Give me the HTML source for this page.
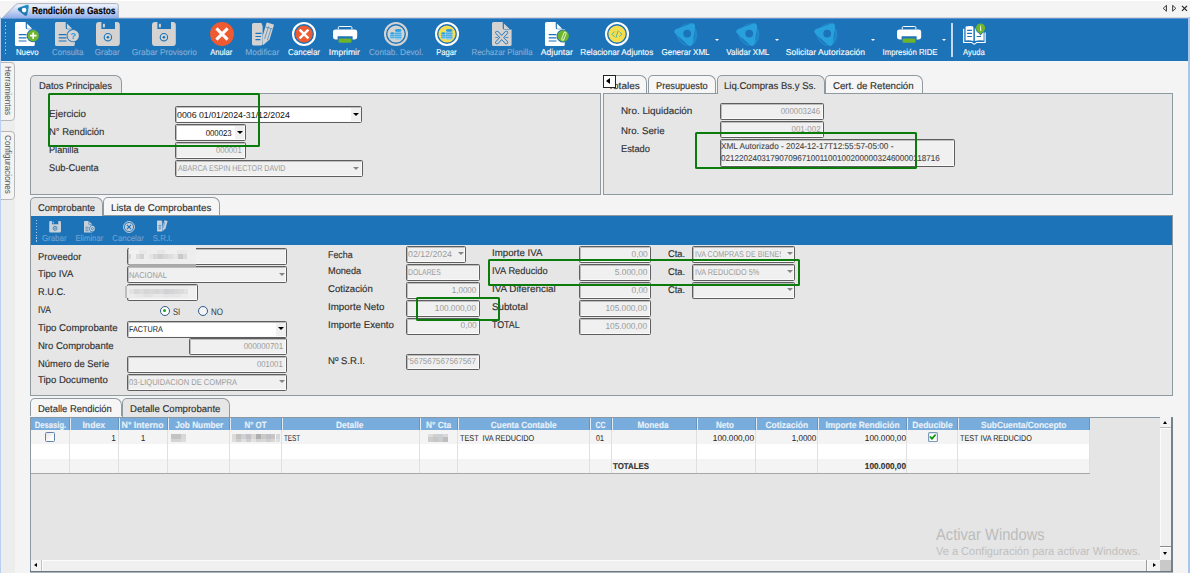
<!DOCTYPE html><html><head><meta charset="utf-8"><title>Rendición de Gastos</title><style>
*{box-sizing:border-box;margin:0;padding:0}
html,body{width:1191px;height:573px;overflow:hidden;background:#f4f4f4;font-family:"Liberation Sans",sans-serif;font-size:11px;color:#222}
.a{position:absolute}
.t{position:absolute;white-space:pre;line-height:14px;height:14px;-webkit-text-stroke:0.14px currentColor}
.in{position:absolute;border-radius:1.5px;border:1px solid #5e5e5e;background:#f0f0f0;box-shadow:inset 1px 1px 0 #bdbdbd, inset -1px -1px 0 #fafafa}
.in.w{background:#fff}
.gb{position:absolute;border:2.3px solid #0b7c0b;border-radius:1.5px}
.pn{position:absolute;background:#e6e6e6;border:1px solid #8f9aa0}
.tab{position:absolute;border:1px solid #8f9aa0;border-bottom:none;border-radius:5px 7px 0 0;background:#f6f6f6}
.tab.on{background:#e6e6e6}
.tb{position:absolute;background:#1c73b8}
.arr{position:absolute;width:0;height:0;margin:.1px 0 0 1.5px;border-left:3.3px solid transparent;border-right:3.3px solid transparent;border-top:3.6px solid #000}
.arr.g{border-top-color:#858585}
</style></head><body><div class="a" style="left:0px;top:0px;width:1191px;height:1px;background:#fff"></div><div class="a" style="left:0px;top:1px;width:1191px;height:16px;background:#f4f4f4"></div><div class="a" style="left:1px;top:61px;width:14px;height:512px;background:#ededed"></div><div class="a" style="left:1188px;top:17px;width:2px;height:556px;background:#a9c6ee"></div><div class="a" style="left:1190px;top:0px;width:1px;height:573px;background:#fff"></div><svg class="a" style="left:0;top:0" width="130" height="19" viewBox="0 0 130 19">
<defs><linearGradient id="tg" x1="0" y1="0" x2="0" y2="1"><stop offset="0" stop-color="#f2f6fd"/><stop offset="0.45" stop-color="#c9d8f5"/><stop offset="1" stop-color="#8eaae8"/></linearGradient></defs>
<path d="M2 18.5 L15.5 4.8 Q16.8 3.6 18.4 3.6 L116.4 3.6 Q118.3 3.6 118.3 5.6 L118.3 18.5 Z" fill="url(#tg)" stroke="#a4a9b4" stroke-width="0.9"/>
<defs><linearGradient id="lg" x1="0" y1="1" x2="1" y2="0"><stop offset="0" stop-color="#17669f"/><stop offset="1" stop-color="#2391c9"/></linearGradient></defs>
<path d="M19.3 9.3 L27.3 6.3 L25.7 14.3 Z" fill="url(#lg)" stroke="url(#lg)" stroke-width="3.1" stroke-linejoin="round"/>
<circle cx="24.1" cy="10.1" r="2.3" fill="#fff"/>
</svg><div class="t" style="top:3.5px;font-size:10.2px;color:#000;font-weight:bold;left:32px;transform-origin:0 50%;transform:scaleX(0.824) rotate(0.03deg);">Rendición de Gastos</div><svg class="a" style="left:1158px;top:2px" width="32" height="14" viewBox="0 0 32 14">
<path d="M8.3 3.6 L5.2 6.3 L8.3 9" fill="none" stroke="#333" stroke-width="0.9"/><path d="M8.4 3.2 L8.4 9.4" stroke="#333" stroke-width="1"/>
<path d="M14.8 3.6 L17.9 6.3 L14.8 9" fill="none" stroke="#333" stroke-width="0.9"/><path d="M14.7 3.2 L14.7 9.4" stroke="#333" stroke-width="1"/>
<path d="M24 3.9 L29 8.9 M29 3.9 L24 8.9" stroke="#222" stroke-width="1.15"/>
</svg><div class="a" style="left:119px;top:17px;width:1069px;height:1px;background:#d9d6da"></div><div class="tb" style="left:1px;top:18px;width:1187px;height:43px;"></div><div class="a" style="left:1px;top:18px;width:1187px;height:1px;background:#5f95d0"></div><div class="a" style="left:4.7px;top:21.6px;width:1.3px;height:34px;background:repeating-linear-gradient(to bottom,#a3c4e6 0 1.4px,transparent 1.4px 3.4px)"></div><div class="t" style="top:45px;font-size:8.5px;color:#fff;left:14.71px;transform-origin:50% 50%;transform:scaleX(0.924) rotate(0.03deg);-webkit-text-stroke-width:0.12px;">Nuevo</div><div class="t" style="top:45px;font-size:8.5px;color:#86aed6;left:50.52px;transform-origin:50% 50%;transform:scaleX(0.939) rotate(0.03deg);-webkit-text-stroke-width:0.12px;">Consulta</div><div class="t" style="top:45px;font-size:8.5px;color:#86aed6;left:93.77px;transform-origin:50% 50%;transform:scaleX(0.945) rotate(0.03deg);-webkit-text-stroke-width:0.12px;">Grabar</div><div class="t" style="top:45px;font-size:8.5px;color:#86aed6;left:130.70px;transform-origin:50% 50%;transform:scaleX(0.976) rotate(0.03deg);-webkit-text-stroke-width:0.12px;">Grabar Provisorio</div><div class="t" style="top:45px;font-size:8.5px;color:#fff;left:208.91px;transform-origin:50% 50%;transform:scaleX(0.895) rotate(0.03deg);-webkit-text-stroke-width:0.12px;">Anular</div><div class="t" style="top:45px;font-size:8.5px;color:#86aed6;left:245.36px;transform-origin:50% 50%;transform:scaleX(0.986) rotate(0.03deg);-webkit-text-stroke-width:0.12px;">Modificar</div><div class="t" style="top:45px;font-size:8.5px;color:#fff;left:287.18px;transform-origin:50% 50%;transform:scaleX(0.940) rotate(0.03deg);-webkit-text-stroke-width:0.12px;">Cancelar</div><div class="t" style="top:45px;font-size:8.5px;color:#fff;left:329.15px;transform-origin:50% 50%;transform:scaleX(1.010) rotate(0.03deg);-webkit-text-stroke-width:0.12px;">Imprimir</div><div class="t" style="top:45px;font-size:8.5px;color:#86aed6;left:367.88px;transform-origin:50% 50%;transform:scaleX(0.967) rotate(0.03deg);-webkit-text-stroke-width:0.12px;">Contab. Devol.</div><div class="t" style="top:45px;font-size:8.5px;color:#fff;left:434.86px;transform-origin:50% 50%;transform:scaleX(0.895) rotate(0.03deg);-webkit-text-stroke-width:0.12px;">Pagar</div><div class="t" style="top:45px;font-size:8.5px;color:#86aed6;left:468.92px;transform-origin:50% 50%;transform:scaleX(0.922) rotate(0.03deg);-webkit-text-stroke-width:0.12px;">Rechazar Planilla</div><div class="t" style="top:45px;font-size:8.5px;color:#fff;left:540.86px;transform-origin:50% 50%;transform:scaleX(1.010) rotate(0.03deg);-webkit-text-stroke-width:0.12px;">Adjuntar</div><div class="t" style="top:45px;font-size:8.5px;color:#fff;left:579.20px;transform-origin:50% 50%;transform:scaleX(0.965) rotate(0.03deg);-webkit-text-stroke-width:0.12px;">Relacionar Adjuntos</div><div class="t" style="top:45px;font-size:8.5px;color:#fff;left:660.48px;transform-origin:50% 50%;transform:scaleX(0.941) rotate(0.03deg);-webkit-text-stroke-width:0.12px;">Generar XML</div><div class="t" style="top:45px;font-size:8.5px;color:#fff;left:724.76px;transform-origin:50% 50%;transform:scaleX(0.941) rotate(0.03deg);-webkit-text-stroke-width:0.12px;">Validar XML</div><div class="t" style="top:45px;font-size:8.5px;color:#fff;left:785.55px;transform-origin:50% 50%;transform:scaleX(1.005) rotate(0.03deg);-webkit-text-stroke-width:0.12px;">Solicitar Autorización</div><div class="t" style="top:45px;font-size:8.5px;color:#fff;left:879.70px;transform-origin:50% 50%;transform:scaleX(0.917) rotate(0.03deg);-webkit-text-stroke-width:0.12px;">Impresión RIDE</div><div class="t" style="top:45px;font-size:8.5px;color:#fff;left:962.02px;transform-origin:50% 50%;transform:scaleX(0.906) rotate(0.03deg);-webkit-text-stroke-width:0.12px;">Ayuda</div><svg class="a" style="left:15px;top:22.2px;overflow:visible" width="26" height="24" viewBox="0 0 26 24"><path d="M1.6 0 H10.7 V5.8 Q10.7 7.3 12.3 7.3 H19.8 V22.4 Q19.8 24 18.2 24 H1.6 Q0 24 0 22.4 V1.6 Q0 0 1.6 0Z" fill="#fff"/><path d="M11.9 1.4 L17.2 6.7 H11.9 Z" fill="#fff"/><path d="M3.7 12.6 H11.5 M3.7 15.8 H11.5 M3.7 19 H11.5" stroke="#1c73b8" stroke-width="1.2"/><circle cx="18.2" cy="13.7" r="6.6" fill="#1c73b8"/><circle cx="18.2" cy="13.7" r="5.7" fill="#6fb52c"/><path d="M18.2 10.4 V17 M14.9 13.7 H21.5" stroke="#fff" stroke-width="1.7"/></svg><svg class="a" style="left:55.3px;top:22.2px;overflow:visible" width="26" height="24" viewBox="0 0 26 24"><path d="M1.6 0 H10.7 V5.8 Q10.7 7.3 12.3 7.3 H19.8 V22.4 Q19.8 24 18.2 24 H1.6 Q0 24 0 22.4 V1.6 Q0 0 1.6 0Z" fill="#d4d3d2"/><path d="M11.9 1.4 L17.2 6.7 H11.9 Z" fill="#d4d3d2"/><path d="M3.7 12.6 H11.5 M3.7 15.8 H11.5 M3.7 19 H11.5" stroke="#1c73b8" stroke-width="1.2"/><circle cx="18.2" cy="13.7" r="6.6" fill="#1c73b8"/><circle cx="18.2" cy="13.7" r="5.7" fill="#d4d3d2"/><text x="18.2" y="17.3" text-anchor="middle" font-family="Liberation Sans, sans-serif" font-weight="bold" font-size="9.5" fill="#2a9fdc">?</text></svg><svg class="a" style="left:95.8px;top:22.2px;overflow:visible" width="24" height="24" viewBox="0 0 24 24"><path d="M3 0 H5.4 V6.9 H19 V0 H20.8 Q23.8 0 23.8 3 V21 Q23.8 24 20.8 24 H3 Q0 24 0 21 V3 Q0 0 3 0Z" fill="#d4d3d2"/><rect x="6.9" y="1.8" width="2" height="3.6" fill="#d4d3d2"/><circle cx="11.9" cy="15.2" r="3.7" fill="none" stroke="#1c73b8" stroke-width="1.1"/><circle cx="11.9" cy="15.2" r="1.3" fill="#1c73b8"/></svg><svg class="a" style="left:152.4px;top:22.2px;overflow:visible" width="24" height="24" viewBox="0 0 24 24"><path d="M3 0 H5.4 V6.9 H19 V0 H20.8 Q23.8 0 23.8 3 V21 Q23.8 24 20.8 24 H3 Q0 24 0 21 V3 Q0 0 3 0Z" fill="#d4d3d2"/><rect x="6.9" y="1.8" width="2" height="3.6" fill="#d4d3d2"/><circle cx="11.9" cy="15.2" r="3.7" fill="none" stroke="#1c73b8" stroke-width="1.1"/><circle cx="11.9" cy="15.2" r="1.3" fill="#1c73b8"/></svg><svg class="a" style="left:209.5px;top:22.1px;overflow:visible" width="24" height="24" viewBox="0 0 24 24"><circle cx="12" cy="12" r="11.9" fill="#f05a30"/><path d="M6.4 6.4 L17.6 17.6 M17.6 6.4 L6.4 17.6" stroke="#fff" stroke-width="3.1"/></svg><svg class="a" style="left:251.8px;top:22.4px;overflow:visible" width="23" height="24" viewBox="0 0 23 24"><path d="M1.6 1 H9.4 L10.6 3.6 V21.8 Q10.6 23.4 9 23.4 H1.6 Q0 23.4 0 21.8 V2.6 Q0 1 1.6 1Z" fill="#d4d3d2"/><path d="M3.5 11.3 H9.6 M3.5 14.5 H9 M3.5 17.7 H8.4" stroke="#1c73b8" stroke-width="1.2"/><path d="M15.2 0.6 L21.6 2.4 Q22 2.6 21.9 3.2 L17.6 17.4 L11.6 22.8 Q10.9 23.2 10.9 22.4 L10.6 14.6 L14.4 1.2 Q14.6 0.5 15.2 0.6Z" fill="#d4d3d2"/><path d="M13.6 5 L20.6 7 M16.6 4.4 L12.6 17 M19 6.8 L15.4 18" stroke="#1c73b8" stroke-width="0.7" opacity=".8"/><path d="M9.9 3 L13 1.8" stroke="#1c73b8" stroke-width="0.8"/></svg><svg class="a" style="left:292.3px;top:22.1px;overflow:visible" width="24" height="24" viewBox="0 0 24 24"><circle cx="12" cy="12" r="11" fill="none" stroke="#fff" stroke-width="2.1"/><circle cx="12" cy="12" r="8.6" fill="#f05a30"/><path d="M7.6 7.6 L16.4 16.4 M16.4 7.6 L7.6 16.4" stroke="#fff" stroke-width="2.5"/></svg><svg class="a" style="left:332.7px;top:25.7px;overflow:visible" width="25" height="18" viewBox="0 0 25 18"><path d="M2.4 3.4 H21.8 Q24.2 3.4 24.2 5.8 V11 Q24.2 13.4 21.8 13.4 H19.6 V10.2 H4.6 V13.4 H2.4 Q0 13.4 0 11 V5.8 Q0 3.4 2.4 3.4Z" fill="#fff"/><path d="M5.3 3.4 V1.6 Q5.3 0.5 6.4 0.5 H17.8 Q18.9 0.5 18.9 1.6 V3.4" fill="none" stroke="#fff" stroke-width="1"/><rect x="5.6" y="12.4" width="12.9" height="4.4" rx="1" fill="#6fb52c"/></svg><svg class="a" style="left:384px;top:22.1px;overflow:visible" width="24" height="24" viewBox="0 0 24 24"><circle cx="12" cy="12" r="11" fill="none" stroke="#d4d3d2" stroke-width="2.1"/><circle cx="12" cy="12" r="8.6" fill="#d4d3d2"/><rect x="6.2" y="11.3" width="4.4" height="5.6" rx="1" fill="#8fcbee"/><ellipse cx="8.4" cy="11.3" rx="2.2" ry="1" fill="#2a9fdc"/><path d="M6.2 13.4 H10.6 M6.2 15.2 H10.6" stroke="#2a9fdc" stroke-width="0.8"/><rect x="11" y="8.4" width="6.4" height="9.4" rx="1.2" fill="#8fcbee"/><ellipse cx="14.2" cy="8.4" rx="3.2" ry="1.4" fill="#2a9fdc"/><path d="M11 11.3 H17.4 M11 13.3 H17.4 M11 15.3 H17.4" stroke="#2a9fdc" stroke-width="0.85"/></svg><svg class="a" style="left:435.4px;top:22.1px;overflow:visible" width="24" height="24" viewBox="0 0 24 24"><circle cx="12" cy="12" r="11" fill="none" stroke="#fff" stroke-width="2.1"/><circle cx="12" cy="12" r="8.6" fill="#f6de4e"/><rect x="6.2" y="11.3" width="4.4" height="5.6" rx="1" fill="#8fcbee"/><ellipse cx="8.4" cy="11.3" rx="2.2" ry="1" fill="#2a9fdc"/><path d="M6.2 13.4 H10.6 M6.2 15.2 H10.6" stroke="#2a9fdc" stroke-width="0.8"/><rect x="11" y="8.4" width="6.4" height="9.4" rx="1.2" fill="#8fcbee"/><ellipse cx="14.2" cy="8.4" rx="3.2" ry="1.4" fill="#2a9fdc"/><path d="M11 11.3 H17.4 M11 13.3 H17.4 M11 15.3 H17.4" stroke="#2a9fdc" stroke-width="0.85"/></svg><svg class="a" style="left:492.3px;top:22.3px;overflow:visible" width="20" height="24" viewBox="0 0 20 24"><path d="M1.6 0 H10.7 V6 Q10.7 7.6 12.3 7.6 H19.6 V22.4 Q19.6 24 18 24 H1.6 Q0 24 0 22.4 V1.6 Q0 0 1.6 0Z" fill="#d4d3d2"/><path d="M11.9 1.4 L17.6 7 H11.9 Z" fill="#d4d3d2"/><path d="M5 10.6 L14.4 20.4 M14.4 10.6 L5 20.4" stroke="#1c73b8" stroke-width="3.6" stroke-linecap="round"/><path d="M5 10.6 L14.4 20.4 M14.4 10.6 L5 20.4" stroke="#d4d3d2" stroke-width="2.2" stroke-linecap="round"/><path d="M3.2 15.5 H6 M13.4 15.5 H16.4" stroke="#1c73b8" stroke-width="0.7"/></svg><svg class="a" style="left:544.7px;top:22.2px;overflow:visible" width="26" height="24" viewBox="0 0 26 24"><path d="M1.6 0 H10.7 V5.8 Q10.7 7.3 12.3 7.3 H19.8 V22.4 Q19.8 24 18.2 24 H1.6 Q0 24 0 22.4 V1.6 Q0 0 1.6 0Z" fill="#fff"/><path d="M11.9 1.4 L17.2 6.7 H11.9 Z" fill="#fff"/><path d="M3.7 12.6 H11.5 M3.7 15.8 H11.5 M3.7 19 H11.5" stroke="#1c73b8" stroke-width="1.2"/><circle cx="18.2" cy="14" r="6.6" fill="#1c73b8"/><circle cx="18.2" cy="14" r="5.7" fill="#6fb52c"/><path d="M16.6 17.2 L19 10.9 Q19.6 9.8 20.6 10.3 Q21.4 10.9 21 11.9 L18.8 17.4 Q18.2 18.4 17.2 18 Q16.3 17.5 16.6 16.6 Z" fill="none" stroke="#d9efc4" stroke-width="1.1"/></svg><svg class="a" style="left:605.3px;top:22.1px;overflow:visible" width="24" height="24" viewBox="0 0 24 24"><circle cx="12" cy="12" r="11" fill="none" stroke="#fff" stroke-width="2.1"/><circle cx="12" cy="12" r="8.6" fill="#f6de4e"/><path d="M9.6 9.6 L7 12.2 L9.6 14.8 M14.4 9.6 L17 12.2 L14.4 14.8 M13 8.6 L11 15.8" fill="none" stroke="#53b3a2" stroke-width="1"/></svg><svg class="a" style="left:673.6px;top:22.5px;overflow:visible" width="25" height="24" viewBox="0 0 25 24"><g><path d="M19.6 4.6 Q24.6 11.4 19.4 19.6" fill="none" stroke="#238fcd" stroke-width="2.6" stroke-linecap="round" opacity=".8"/><path d="M3.2 12.4 Q5.4 19.6 12.6 22.2" fill="none" stroke="#238fcd" stroke-width="2" stroke-linecap="round" opacity=".6"/><path d="M8 3.4 Q12 0.4 17 0.8" fill="none" stroke="#238fcd" stroke-width="1.6" stroke-linecap="round" opacity=".6"/><path d="M3.2 8.6 L18.3 3.1 L16 20.3 Z" fill="#27a0dc" stroke="#27a0dc" stroke-width="5.6" stroke-linejoin="round"/><circle cx="13.2" cy="10.6" r="3.9" fill="#1c73b8"/></g></svg><svg class="a" style="left:735.6px;top:22.5px;overflow:visible" width="25" height="24" viewBox="0 0 25 24"><g><path d="M19.6 4.6 Q24.6 11.4 19.4 19.6" fill="none" stroke="#238fcd" stroke-width="2.6" stroke-linecap="round" opacity=".8"/><path d="M3.2 12.4 Q5.4 19.6 12.6 22.2" fill="none" stroke="#238fcd" stroke-width="2" stroke-linecap="round" opacity=".6"/><path d="M8 3.4 Q12 0.4 17 0.8" fill="none" stroke="#238fcd" stroke-width="1.6" stroke-linecap="round" opacity=".6"/><path d="M3.2 8.6 L18.3 3.1 L16 20.3 Z" fill="#27a0dc" stroke="#27a0dc" stroke-width="5.6" stroke-linejoin="round"/><circle cx="13.2" cy="10.6" r="3.9" fill="#1c73b8"/></g></svg><svg class="a" style="left:813.8px;top:22.5px;overflow:visible" width="25" height="24" viewBox="0 0 25 24"><g><path d="M19.6 4.6 Q24.6 11.4 19.4 19.6" fill="none" stroke="#238fcd" stroke-width="2.6" stroke-linecap="round" opacity=".8"/><path d="M3.2 12.4 Q5.4 19.6 12.6 22.2" fill="none" stroke="#238fcd" stroke-width="2" stroke-linecap="round" opacity=".6"/><path d="M8 3.4 Q12 0.4 17 0.8" fill="none" stroke="#238fcd" stroke-width="1.6" stroke-linecap="round" opacity=".6"/><path d="M3.2 8.6 L18.3 3.1 L16 20.3 Z" fill="#27a0dc" stroke="#27a0dc" stroke-width="5.6" stroke-linejoin="round"/><circle cx="13.2" cy="10.6" r="3.9" fill="#1c73b8"/></g></svg><svg class="a" style="left:896.9px;top:25.7px;overflow:visible" width="25" height="18" viewBox="0 0 25 18"><path d="M2.4 3.4 H21.8 Q24.2 3.4 24.2 5.8 V11 Q24.2 13.4 21.8 13.4 H19.6 V10.2 H4.6 V13.4 H2.4 Q0 13.4 0 11 V5.8 Q0 3.4 2.4 3.4Z" fill="#fff"/><path d="M5.3 3.4 V1.6 Q5.3 0.5 6.4 0.5 H17.8 Q18.9 0.5 18.9 1.6 V3.4" fill="none" stroke="#fff" stroke-width="1"/><rect x="5.6" y="12.4" width="12.9" height="4.4" rx="1" fill="#6fb52c"/></svg><div class="a" style="left:715.1999999999999px;top:39px;width:0;height:0;border-left:2.2px solid transparent;border-right:2.2px solid transparent;border-top:2.4px solid #fff"></div><div class="a" style="left:774.5px;top:39px;width:0;height:0;border-left:2.2px solid transparent;border-right:2.2px solid transparent;border-top:2.4px solid #fff"></div><div class="a" style="left:870.6999999999999px;top:39px;width:0;height:0;border-left:2.2px solid transparent;border-right:2.2px solid transparent;border-top:2.4px solid #fff"></div><div class="a" style="left:942.1999999999999px;top:39px;width:0;height:0;border-left:2.2px solid transparent;border-right:2.2px solid transparent;border-top:2.4px solid #fff"></div><div class="a" style="left:951px;top:23px;width:1.5px;height:34px;background:#c5d9ee"></div><svg class="a" style="left:962.8px;top:23px;overflow:visible" width="23" height="22" viewBox="0 0 23 22"><path d="M0.7 5.8 V19.5 H8.8 Q11.2 22.6 13.6 19.5 H22.1 V9.4" fill="none" stroke="#fff" stroke-width="1.2"/><path d="M2.6 3.5 Q7 2.6 9.6 3.3 Q10.4 3.5 10.4 4.4 V17.9 Q6.5 16.9 2.6 17.5 Z" fill="#fff"/><path d="M11.9 5 L15.4 5.6 L17.6 10.9 L20.6 7.6 V17.5 Q16 16.9 11.9 17.9 Z" fill="#fff"/><path d="M4.2 7.3 H8.9 M4.2 10.3 H8.9 M4.2 13.5 H8.9 M13.6 13.5 H18" stroke="#1c73b8" stroke-width="1.2"/><circle cx="17.6" cy="5" r="5.3" fill="#1c73b8"/><path d="M14.4 8.6 L17.6 12.4 L20.8 8.6Z" fill="#1c73b8"/><circle cx="17.6" cy="5" r="4.6" fill="#6fb52c"/><path d="M15.3 8.8 L17.6 11.3 L19.9 8.8Z" fill="#6fb52c"/><path d="M17.35 2.5 H17.95 L18.25 7.7 H17.05 Z" fill="#fff"/></svg><div class="a" style="left:-1px;top:62px;width:16px;height:59px;background:#f4f4f4;border:1px solid #b9b9b9;border-radius:0 4px 4px 0"></div><div class="a" style="left:-1px;top:131px;width:16px;height:69px;background:#f4f4f4;border:1px solid #b9b9b9;border-radius:0 4px 4px 0"></div><div class="a" style="left:0px;top:17px;width:1px;height:556px;background:#b7cff0"></div><div class="t" style="top:66.4px;left:15.1px;font-size:8.6px;color:#555;transform-origin:0 0;transform:rotate(90deg) scaleX(0.954);-webkit-text-stroke:0;">Herramientas</div><div class="t" style="top:135.2px;left:15.1px;font-size:8.6px;color:#555;transform-origin:0 0;transform:rotate(90deg) scaleX(0.947);-webkit-text-stroke:0;">Configuraciones</div><div class="pn" style="left:30px;top:93px;width:571px;height:102px;"></div><div class="tab on" style="left:30px;top:75px;width:92px;height:19px;"></div><div class="t" style="top:78.5px;font-size:9.8px;color:#303030;left:39px;transform-origin:0 50%;transform:scaleX(0.958) rotate(0.03deg);">Datos Principales</div><div class="t" style="top:106.5px;font-size:9.8px;color:#303030;left:49px;transform-origin:0 50%;transform:scaleX(0.999) rotate(0.03deg);">Ejercicio</div><div class="t" style="top:124.5px;font-size:9.8px;color:#303030;left:49px;transform-origin:0 50%;transform:scaleX(0.967) rotate(0.03deg);">N° Rendición</div><div class="t" style="top:142.5px;font-size:9.8px;color:#303030;left:49px;transform-origin:0 50%;transform:scaleX(0.934) rotate(0.03deg);">Planilla</div><div class="t" style="top:160.5px;font-size:9.8px;color:#303030;left:49px;transform-origin:0 50%;transform:scaleX(0.948) rotate(0.03deg);">Sub-Cuenta</div><div class="in w" style="left:175px;top:106px;width:187px;height:17px;"></div><div class="t" style="top:108px;font-size:8.6px;color:#222;left:176.9px;transform-origin:0 50%;transform:scaleX(1.022) rotate(0.03deg);-webkit-text-stroke:0.05px #222;">0006 01/01/2024-31/12/2024</div><div class="a" style="left:351px;top:108px;width:9.5px;height:13px;background:#f0f0f0"></div><div class="arr" style="left:351px;top:113px"></div><div class="in w" style="left:175px;top:124px;width:71px;height:17px;"></div><div class="t" style="top:126px;font-size:8.6px;color:#222;right:959.8px;transform-origin:100% 50%;transform:scaleX(0.906) rotate(0.03deg);-webkit-text-stroke:0.05px #222;">000023</div><div class="a" style="left:234.5px;top:126px;width:9.5px;height:13px;background:#f0f0f0"></div><div class="arr" style="left:235px;top:131px"></div><div class="in" style="left:175px;top:142px;width:71px;height:17px;"></div><div class="t" style="top:143px;font-size:8.6px;color:#9a9a9a;right:949.1px;transform-origin:100% 50%;transform:scaleX(0.896) rotate(0.03deg);-webkit-text-stroke:0;">000001</div><div class="in" style="left:175px;top:160px;width:188px;height:17px;"></div><div class="t" style="top:161px;font-size:8.5px;color:#9a9a9a;left:178.2px;transform-origin:0 50%;transform:scaleX(0.839) rotate(0.03deg);-webkit-text-stroke:0;">ABARCA ESPIN HECTOR DAVID</div><div class="arr g" style="left:351px;top:167px"></div><div class="gb" style="left:47.8px;top:93.4px;width:211.9px;height:53.8px;"></div><div class="pn" style="left:603px;top:93px;width:570px;height:102px;"></div><div class="tab" style="left:616px;top:75px;width:31px;height:18px;border-left:none;border-radius:0 7px 0 0"></div><div class="tab" style="left:648px;top:75px;width:68px;height:18px;"></div><div class="tab on" style="left:717px;top:75px;width:108px;height:19px;"></div><div class="tab" style="left:825px;top:75px;width:98px;height:18px;"></div><div class="t" style="top:78.5px;font-size:9.8px;color:#303030;left:608.2px;transform-origin:0 50%;transform:scaleX(1.024) rotate(0.03deg);">Totales</div><div class="t" style="top:78.5px;font-size:9.8px;color:#303030;left:656px;transform-origin:0 50%;transform:scaleX(0.938) rotate(0.03deg);">Presupuesto</div><div class="t" style="top:78.5px;font-size:9.8px;color:#303030;left:724px;transform-origin:0 50%;transform:scaleX(0.977) rotate(0.03deg);">Liq.Compras Bs.y Ss.</div><div class="t" style="top:78.5px;font-size:9.8px;color:#303030;left:833px;transform-origin:0 50%;transform:scaleX(0.987) rotate(0.03deg);">Cert. de Retención</div><div class="a" style="left:603px;top:75px;width:13px;height:13px;background:#fff;border:1px solid #222"></div><div class="a" style="left:606px;top:78px;width:0;height:0;border-top:3.5px solid transparent;border-bottom:3.5px solid transparent;border-right:4px solid #000"></div><div class="t" style="top:103.5px;font-size:9.8px;color:#303030;left:621px;transform-origin:0 50%;transform:scaleX(1.007) rotate(0.03deg);">Nro. Liquidación</div><div class="t" style="top:123.5px;font-size:9.8px;color:#303030;left:621px;transform-origin:0 50%;transform:scaleX(0.988) rotate(0.03deg);">Nro. Serie</div><div class="t" style="top:141.5px;font-size:9.8px;color:#303030;left:621px;transform-origin:0 50%;transform:scaleX(0.950) rotate(0.03deg);">Estado</div><div class="in" style="left:720px;top:103px;width:104px;height:17px;"></div><div class="t" style="top:104px;font-size:8.6px;color:#9a9a9a;right:370.8px;transform-origin:100% 50%;transform:scaleX(0.914) rotate(0.03deg);-webkit-text-stroke:0;">000003246</div><div class="in" style="left:720px;top:121px;width:104px;height:17px;"></div><div class="t" style="top:122px;font-size:8.6px;color:#9a9a9a;right:370.8px;transform-origin:100% 50%;transform:scaleX(0.919) rotate(0.03deg);-webkit-text-stroke:0;">001-002</div><div class="in" style="left:720px;top:139px;width:235px;height:28px;"></div><div class="t" style="top:139px;font-size:8.5px;color:#444;left:721.2px;transform-origin:0 50%;transform:scaleX(0.967) rotate(0.03deg);-webkit-text-stroke:0.1px #444;">XML Autorizado - 2024-12-17T12:55:57-05:00 -</div><div class="t" style="top:151px;font-size:8.5px;color:#444;left:721.2px;transform-origin:0 50%;transform:scaleX(0.949) rotate(0.03deg);-webkit-text-stroke:0.1px #444;">0212202403179070967100110010020000032460000118716</div><div class="gb" style="left:695px;top:132px;width:221.5px;height:37.4px;"></div><div class="pn" style="left:30px;top:215px;width:1143px;height:181px;"></div><div class="tab on" style="left:30px;top:197px;width:73px;height:19px;"></div><div class="tab" style="left:103px;top:197px;width:117px;height:18px;"></div><div class="t" style="top:200.5px;font-size:9.8px;color:#303030;left:38px;transform-origin:0 50%;transform:scaleX(0.960) rotate(0.03deg);">Comprobante</div><div class="t" style="top:200.5px;font-size:9.8px;color:#303030;left:111px;transform-origin:0 50%;transform:scaleX(0.990) rotate(0.03deg);">Lista de Comprobantes</div><div class="tb" style="left:31px;top:216px;width:1141px;height:28.5px;"></div><div class="a" style="left:35.7px;top:220px;width:1.4px;height:22px;background:repeating-linear-gradient(to bottom,#a9c8e8 0 1.4px,transparent 1.4px 2.9px)"></div><div class="t" style="top:231px;font-size:8.5px;color:#6fa0d2;left:41.37px;transform-origin:50% 50%;transform:scaleX(0.933) rotate(0.03deg);">Grabar</div><div class="t" style="top:231px;font-size:8.5px;color:#6fa0d2;left:74.15px;transform-origin:50% 50%;transform:scaleX(0.902) rotate(0.03deg);">Eliminar</div><div class="t" style="top:231px;font-size:8.5px;color:#6fa0d2;left:111.28px;transform-origin:50% 50%;transform:scaleX(0.931) rotate(0.03deg);">Cancelar</div><div class="t" style="top:231px;font-size:8.5px;color:#6fa0d2;left:151.57px;transform-origin:50% 50%;transform:scaleX(0.922) rotate(0.03deg);">S.R.I.</div><svg class="a" style="left:48.9px;top:220.6px;overflow:visible" width="11" height="10" viewBox="0 0 11 10"><g transform="scale(1.13,1.16)"><path d="M1.4 0 H2.6 V2.8 H8.2 V0 H9.4 Q10.6 0 10.6 1.2 V8.8 Q10.6 10 9.4 10 H1.4 Q0.2 10 0.2 8.8 V1.2 Q0.2 0 1.4 0Z" fill="#c9d0d8"/><rect x="3.3" y="0.6" width="0.9" height="1.5" fill="#c9d0d8"/><circle cx="5.4" cy="6.3" r="1.7" fill="none" stroke="#1c73b8" stroke-width="0.7"/><circle cx="5.4" cy="6.3" r="0.6" fill="#1c73b8"/></g></svg><svg class="a" style="left:84.2px;top:220.6px;overflow:visible" width="12" height="10" viewBox="0 0 12 10"><g transform="scale(1.0,1.16)"><path d="M0.8 0 H4.6 V3 H8.2 V10 H0.8 Q0 10 0 9.2 V0.8 Q0 0 0.8 0Z" fill="#c9d0d8"/><path d="M5.2 0.4 L7.8 2.6 H5.2Z" fill="#c9d0d8"/><path d="M1.4 5.4 H4.6 M1.4 6.9 H4.6 M1.4 8.4 H4.6" stroke="#1c73b8" stroke-width="0.6"/><circle cx="8.4" cy="6.6" r="3" fill="#1c73b8"/><circle cx="8.4" cy="6.6" r="2.4" fill="#c9d0d8"/><circle cx="8.4" cy="6.6" r="1" fill="none" stroke="#1c73b8" stroke-width="0.6"/></g></svg><svg class="a" style="left:122.6px;top:220.7px;overflow:visible" width="11" height="11" viewBox="0 0 11 11"><g transform="scale(1.09,1.09)"><circle cx="5.5" cy="5.5" r="5" fill="none" stroke="#c9d0d8" stroke-width="0.9"/><circle cx="5.5" cy="5.5" r="3.7" fill="#c9d0d8"/><path d="M3.6 3.6 L7.4 7.4 M7.4 3.6 L3.6 7.4" stroke="#1c73b8" stroke-width="1.1"/></g></svg><svg class="a" style="left:157.2px;top:220.3px;overflow:visible" width="10" height="11" viewBox="0 0 10 11"><g transform="scale(1.13,1.1)"><path d="M0.6 0.4 H4 L4.6 1.6 V10.4 H0.6 Q0 10.4 0 9.8 V1 Q0 0.4 0.6 0.4Z" fill="#c9d0d8"/><path d="M1.4 5 H3.8 M1.4 6.5 H3.6 M1.4 8 H3.4" stroke="#1c73b8" stroke-width="0.6"/><path d="M6.6 0.2 L9.4 1 L7.6 7.6 L5 10.2 L4.8 6.4 Z" fill="#c9d0d8"/><path d="M6.9 1.8 L5.6 7.2" stroke="#1c73b8" stroke-width="0.4"/></g></svg><div class="t" style="top:249.5px;font-size:9.8px;color:#303030;left:38px;transform-origin:0 50%;transform:scaleX(0.958) rotate(0.03deg);">Proveedor</div><div class="t" style="top:266.5px;font-size:9.8px;color:#303030;left:38px;transform-origin:0 50%;transform:scaleX(0.968) rotate(0.03deg);">Tipo IVA</div><div class="t" style="top:284.5px;font-size:9.8px;color:#303030;left:38px;transform-origin:0 50%;transform:scaleX(0.942) rotate(0.03deg);">R.U.C.</div><div class="t" style="top:302.5px;font-size:9.8px;color:#303030;left:38px;transform-origin:0 50%;transform:scaleX(0.862) rotate(0.03deg);">IVA</div><div class="t" style="top:320.5px;font-size:9.8px;color:#303030;left:38px;transform-origin:0 50%;transform:scaleX(0.985) rotate(0.03deg);">Tipo Comprobante</div><div class="t" style="top:338.5px;font-size:9.8px;color:#303030;left:38px;transform-origin:0 50%;transform:scaleX(0.971) rotate(0.03deg);">Nro Comprobante</div><div class="t" style="top:356.5px;font-size:9.8px;color:#303030;left:38px;transform-origin:0 50%;transform:scaleX(0.963) rotate(0.03deg);">Número de Serie</div><div class="t" style="top:372.5px;font-size:9.8px;color:#303030;left:38px;transform-origin:0 50%;transform:scaleX(0.976) rotate(0.03deg);">Tipo Documento</div><div class="in" style="left:127px;top:248px;width:160px;height:17px;"></div><div class="in" style="left:127px;top:266px;width:160px;height:17px;"></div><div class="t" style="top:268px;font-size:8.5px;color:#9a9a9a;left:129.2px;transform-origin:0 50%;transform:scaleX(0.870) rotate(0.03deg);-webkit-text-stroke:0;">NACIONAL</div><div class="arr g" style="left:277px;top:273px"></div><div class="in" style="left:127px;top:284px;width:71px;height:17px;"></div><div class="a" style="left:129px;top:246.4px;width:66.6px;height:17.4px;background:#eeeeee"></div><div class="a" style="left:129px;top:263.6px;width:66.6px;height:3px;background:#a9a9a9"></div><div class="a" style="left:129px;top:254px;width:2px;height:5px;background:#d9d9d9"></div><div class="a" style="left:131px;top:254px;width:5px;height:5px;background:#efefef"></div><div class="a" style="left:136px;top:254px;width:4px;height:5px;background:#dcdcdc"></div><div class="a" style="left:140px;top:254px;width:4px;height:5px;background:#d2d2d2"></div><div class="a" style="left:144px;top:254px;width:5px;height:5px;background:#ececec"></div><div class="a" style="left:149px;top:254px;width:4px;height:5px;background:#e4e4e4"></div><div class="a" style="left:153px;top:254px;width:5px;height:5px;background:#d6d6d6"></div><div class="a" style="left:158px;top:254px;width:5px;height:5px;background:#cfcfcf"></div><div class="a" style="left:163px;top:254px;width:5px;height:5px;background:#d8d8d8"></div><div class="a" style="left:168px;top:254px;width:5px;height:5px;background:#dedede"></div><div class="a" style="left:173px;top:254px;width:5px;height:5px;background:#e6e6e6"></div><div class="a" style="left:178px;top:254px;width:5px;height:5px;background:#c9c9c9"></div><div class="a" style="left:183px;top:254px;width:4px;height:5px;background:#dadada"></div><div class="a" style="left:129px;top:250px;width:10px;height:4px;background:#f1f1f1"></div><div class="a" style="left:139px;top:250px;width:8px;height:4px;background:#e9e9e9"></div><div class="a" style="left:147px;top:250px;width:10px;height:4px;background:#eeeeee"></div><div class="a" style="left:157px;top:250px;width:8px;height:4px;background:#e7e7e7"></div><div class="a" style="left:165px;top:250px;width:12px;height:4px;background:#efefef"></div><div class="a" style="left:177px;top:250px;width:10px;height:4px;background:#e8e8e8"></div><div class="a" style="left:187px;top:250px;width:8.6px;height:4px;background:#ededed"></div><div class="a" style="left:125.3px;top:286.3px;width:62.7px;height:11.4px;background:#ececec"></div><div class="a" style="left:125.3px;top:286.3px;width:2px;height:11.4px;background:#bebebe"></div><div class="a" style="left:129px;top:289.4px;width:5px;height:4.6px;background:#e2e2e2"></div><div class="a" style="left:134px;top:289.4px;width:5px;height:4.6px;background:#d8d8d8"></div><div class="a" style="left:139px;top:289.4px;width:5px;height:4.6px;background:#dcdcdc"></div><div class="a" style="left:144px;top:289.4px;width:5px;height:4.6px;background:#d4d6d8"></div><div class="a" style="left:149px;top:289.4px;width:5px;height:4.6px;background:#d9d9d9"></div><div class="a" style="left:154px;top:289.4px;width:5px;height:4.6px;background:#d6d6d6"></div><div class="a" style="left:159px;top:289.4px;width:5px;height:4.6px;background:#dadada"></div><div class="a" style="left:164px;top:289.4px;width:5px;height:4.6px;background:#d0d2d6"></div><div class="a" style="left:169px;top:289.4px;width:5px;height:4.6px;background:#d4d4d4"></div><div class="a" style="left:174px;top:289.4px;width:5px;height:4.6px;background:#d8d8d8"></div><div class="a" style="left:179px;top:289.4px;width:5px;height:4.6px;background:#dcdcdc"></div><div class="a" style="left:184px;top:289.4px;width:3.5px;height:4.6px;background:#e2e2e2"></div><div class="a" style="left:135px;top:294px;width:8px;height:3.4px;background:#e8e8e8"></div><div class="a" style="left:143px;top:294px;width:10px;height:3.4px;background:#e2e2e2"></div><div class="a" style="left:153px;top:294px;width:10px;height:3.4px;background:#e9e9e9"></div><div class="a" style="left:163px;top:294px;width:10px;height:3.4px;background:#e4e4e4"></div><div class="a" style="left:173px;top:294px;width:8px;height:3.4px;background:#e6e6e6"></div><div class="a" style="left:159.6px;top:305.6px;width:10px;height:10px;border:1px solid #2d5b8c;border-radius:50%;background:#fff"></div><div class="a" style="left:162.8px;top:308.8px;width:3.6px;height:3.6px;border-radius:50%;background:#21a121"></div><div class="t" style="top:304.5px;font-size:9.5px;color:#333;left:173px;transform-origin:0 50%;transform:scaleX(0.801) rotate(0.03deg);-webkit-text-stroke:0;">SI</div><div class="a" style="left:197.8px;top:305.6px;width:10px;height:10px;border:1px solid #2d5b8c;border-radius:50%;background:#f4f4f4"></div><div class="t" style="top:304.5px;font-size:9.5px;color:#333;left:210.8px;transform-origin:0 50%;transform:scaleX(0.842) rotate(0.03deg);-webkit-text-stroke:0;">NO</div><div class="in w" style="left:127px;top:321px;width:160px;height:17px;"></div><div class="t" style="top:322px;font-size:8.5px;color:#222;left:129.2px;transform-origin:0 50%;transform:scaleX(0.852) rotate(0.03deg);-webkit-text-stroke:0.05px #222;">FACTURA</div><div class="a" style="left:276px;top:323px;width:9.5px;height:13px;background:#f0f0f0"></div><div class="arr" style="left:276.6px;top:327px"></div><div class="in" style="left:189px;top:338px;width:98px;height:17px;"></div><div class="t" style="top:339px;font-size:8.6px;color:#9a9a9a;right:908px;transform-origin:100% 50%;transform:scaleX(0.914) rotate(0.03deg);-webkit-text-stroke:0;">000000701</div><div class="in" style="left:127px;top:356px;width:160px;height:17px;"></div><div class="t" style="top:357px;font-size:8.6px;color:#9a9a9a;right:908px;transform-origin:100% 50%;transform:scaleX(0.896) rotate(0.03deg);-webkit-text-stroke:0;">001001</div><div class="in" style="left:127px;top:374px;width:160px;height:17px;"></div><div class="t" style="top:375px;font-size:8.5px;color:#9a9a9a;left:129.2px;transform-origin:0 50%;transform:scaleX(0.890) rotate(0.03deg);-webkit-text-stroke:0;">03-LIQUIDACION DE COMPRA</div><div class="arr g" style="left:277px;top:380px"></div><div class="t" style="top:247.5px;font-size:9.8px;color:#303030;left:328px;transform-origin:0 50%;transform:scaleX(0.907) rotate(0.03deg);">Fecha</div><div class="t" style="top:263.5px;font-size:9.8px;color:#303030;left:328px;transform-origin:0 50%;transform:scaleX(0.938) rotate(0.03deg);">Moneda</div><div class="t" style="top:281.5px;font-size:9.8px;color:#303030;left:328px;transform-origin:0 50%;transform:scaleX(0.979) rotate(0.03deg);">Cotización</div><div class="t" style="top:299.5px;font-size:9.8px;color:#303030;left:328px;transform-origin:0 50%;transform:scaleX(0.996) rotate(0.03deg);">Importe Neto</div><div class="t" style="top:317.5px;font-size:9.8px;color:#303030;left:328px;transform-origin:0 50%;transform:scaleX(0.993) rotate(0.03deg);">Importe Exento</div><div class="t" style="top:353.5px;font-size:9.8px;color:#303030;left:328px;transform-origin:0 50%;transform:scaleX(0.977) rotate(0.03deg);">Nº S.R.I.</div><div class="in" style="left:406px;top:246px;width:60px;height:17px;"></div><div class="t" style="top:247px;font-size:8.5px;color:#9a9a9a;left:407.8px;transform-origin:0 50%;transform:scaleX(1.034) rotate(0.03deg);-webkit-text-stroke:0;">02/12/2024</div><div class="arr g" style="left:456px;top:252px"></div><div class="in" style="left:406px;top:264px;width:74px;height:17px;"></div><div class="t" style="top:265px;font-size:8.5px;color:#9a9a9a;left:408.3px;transform-origin:0 50%;transform:scaleX(0.805) rotate(0.03deg);-webkit-text-stroke:0;">DOLARES</div><div class="in" style="left:406px;top:282px;width:74px;height:17px;"></div><div class="t" style="top:283px;font-size:8.6px;color:#9a9a9a;right:714.7px;transform-origin:100% 50%;transform:scaleX(0.935) rotate(0.03deg);-webkit-text-stroke:0;">1,0000</div><div class="in" style="left:406px;top:300px;width:74px;height:17px;"></div><div class="t" style="top:301px;font-size:8.6px;color:#9a9a9a;right:714.7px;transform-origin:100% 50%;transform:scaleX(0.958) rotate(0.03deg);-webkit-text-stroke:0;">100.000,00</div><div class="in" style="left:406px;top:318px;width:74px;height:17px;"></div><div class="t" style="top:318px;font-size:8.6px;color:#9a9a9a;right:714.7px;transform-origin:100% 50%;transform:scaleX(0.968) rotate(0.03deg);-webkit-text-stroke:0;">0,00</div><div class="in" style="left:406px;top:354px;width:74px;height:16px;"></div><div class="t" style="top:354px;font-size:8.5px;color:#9a9a9a;left:407.8px;transform-origin:0 50%;transform:scaleX(0.937) rotate(0.03deg);-webkit-text-stroke:0;">&#x27;567567567567567</div><div class="t" style="top:245.5px;font-size:9.8px;color:#303030;left:492px;transform-origin:0 50%;transform:scaleX(0.988) rotate(0.03deg);">Importe IVA</div><div class="t" style="top:263.5px;font-size:9.8px;color:#303030;left:492px;transform-origin:0 50%;transform:scaleX(0.950) rotate(0.03deg);">IVA Reducido</div><div class="t" style="top:281.5px;font-size:9.8px;color:#303030;left:492px;transform-origin:0 50%;transform:scaleX(1.003) rotate(0.03deg);">IVA Diferencial</div><div class="t" style="top:299.5px;font-size:9.8px;color:#303030;left:492px;transform-origin:0 50%;transform:scaleX(0.996) rotate(0.03deg);">Subtotal</div><div class="t" style="top:317.5px;font-size:9.8px;color:#303030;left:492px;transform-origin:0 50%;transform:scaleX(0.903) rotate(0.03deg);">TOTAL</div><div class="in" style="left:579px;top:246px;width:72px;height:17px;"></div><div class="t" style="top:247px;font-size:8.6px;color:#9a9a9a;right:543.5px;transform-origin:100% 50%;transform:scaleX(0.968) rotate(0.03deg);-webkit-text-stroke:0;">0,00</div><div class="in" style="left:579px;top:264px;width:72px;height:17px;"></div><div class="t" style="top:265px;font-size:8.6px;color:#9a9a9a;right:543.5px;transform-origin:100% 50%;transform:scaleX(0.977) rotate(0.03deg);-webkit-text-stroke:0;">5.000,00</div><div class="in" style="left:579px;top:282px;width:72px;height:17px;"></div><div class="t" style="top:283px;font-size:8.6px;color:#9a9a9a;right:543.5px;transform-origin:100% 50%;transform:scaleX(0.968) rotate(0.03deg);-webkit-text-stroke:0;">0,00</div><div class="in" style="left:579px;top:300px;width:72px;height:17px;"></div><div class="t" style="top:301px;font-size:8.6px;color:#9a9a9a;right:543.5px;transform-origin:100% 50%;transform:scaleX(0.967) rotate(0.03deg);-webkit-text-stroke:0;">105.000,00</div><div class="in" style="left:579px;top:318px;width:72px;height:17px;"></div><div class="t" style="top:319px;font-size:8.6px;color:#9a9a9a;right:543.5px;transform-origin:100% 50%;transform:scaleX(0.967) rotate(0.03deg);-webkit-text-stroke:0;">105.000,00</div><div class="t" style="top:246.5px;font-size:9.8px;color:#303030;left:667.6px;transform-origin:0 50%;transform:scaleX(0.952) rotate(0.03deg);">Cta.</div><div class="in" style="left:692px;top:246px;width:103px;height:17px;"></div><div class="t" style="top:247px;font-size:8.5px;color:#9a9a9a;left:694.8px;transform-origin:0 50%;transform:scaleX(0.842) rotate(0.03deg);-webkit-text-stroke:0;">IVA COMPRAS DE BIENES</div><div class="a" style="left:781px;top:248px;width:12px;height:12px;background:#f0f0f0"></div><div class="arr g" style="left:785px;top:252px"></div><div class="t" style="top:264.5px;font-size:9.8px;color:#303030;left:667.6px;transform-origin:0 50%;transform:scaleX(0.952) rotate(0.03deg);">Cta.</div><div class="in" style="left:692px;top:264px;width:103px;height:17px;"></div><div class="t" style="top:265px;font-size:8.5px;color:#9a9a9a;left:694.8px;transform-origin:0 50%;transform:scaleX(0.857) rotate(0.03deg);-webkit-text-stroke:0;">IVA REDUCIDO 5%</div><div class="a" style="left:781px;top:266px;width:12px;height:12px;background:#f0f0f0"></div><div class="arr g" style="left:785px;top:270px"></div><div class="t" style="top:282.5px;font-size:9.8px;color:#303030;left:667.6px;transform-origin:0 50%;transform:scaleX(0.952) rotate(0.03deg);">Cta.</div><div class="in" style="left:692px;top:282px;width:103px;height:17px;"></div><div class="a" style="left:781px;top:284px;width:12px;height:12px;background:#f0f0f0"></div><div class="arr g" style="left:785px;top:288px"></div><div class="gb" style="left:416.3px;top:297.1px;width:84px;height:24.4px;"></div><div class="gb" style="left:488.4px;top:259.1px;width:311.7px;height:26.6px;"></div><div class="a" style="left:30px;top:416.6px;width:1143px;height:156.4px;background:#e5e5e5;border:1px solid #8a99a3;border-right:2px solid #76828a;border-bottom:none"></div><div class="a" style="left:30px;top:570.4px;width:1143px;height:1.4px;background:#6f787e"></div><div class="a" style="left:30px;top:571.8px;width:1143px;height:1.2px;background:#aab3b9"></div><div class="tab" style="left:30px;top:398px;width:92px;height:18px;"></div><div class="tab on" style="left:122px;top:398px;width:108px;height:19px;"></div><div class="t" style="top:401.5px;font-size:9.8px;color:#303030;left:38px;transform-origin:0 50%;transform:scaleX(0.961) rotate(0.03deg);">Detalle Rendición</div><div class="t" style="top:401.5px;font-size:9.8px;color:#303030;left:130px;transform-origin:0 50%;transform:scaleX(0.976) rotate(0.03deg);">Detalle Comprobante</div><div class="a" style="left:31px;top:417.6px;width:1059px;height:12.8px;background:#77acdc"></div><div class="a" style="left:31px;top:429.8px;width:1059px;height:0.8px;background:#8a9fb6"></div><div class="a" style="left:31px;top:430px;width:1059px;height:14px;background:#f4f4f4"></div><div class="a" style="left:31px;top:444px;width:1059px;height:15px;background:#fff"></div><div class="a" style="left:31px;top:459px;width:1059px;height:14px;background:#f4f4f4"></div><div class="t" style="top:418px;font-size:9px;color:#e9f1f9;font-weight:bold;left:31.58px;transform-origin:50% 50%;transform:scaleX(0.848) rotate(0.03deg);">Desasig.</div><div class="a" style="left:70px;top:417.6px;width:1px;height:12.8px;background:#dfeaf5"></div><div class="a" style="left:69px;top:417.6px;width:1px;height:12.8px;background:#6c93b8"></div><div class="a" style="left:69px;top:430.4px;width:1px;height:42.6px;background:#e0e0e0"></div><div class="t" style="top:418px;font-size:9px;color:#e9f1f9;font-weight:bold;left:82.04px;transform-origin:50% 50%;transform:scaleX(0.961) rotate(0.03deg);">Index</div><div class="a" style="left:119px;top:417.6px;width:1px;height:12.8px;background:#dfeaf5"></div><div class="a" style="left:118px;top:417.6px;width:1px;height:12.8px;background:#6c93b8"></div><div class="a" style="left:118px;top:430.4px;width:1px;height:42.6px;background:#e0e0e0"></div><div class="t" style="top:418px;font-size:9px;color:#e9f1f9;font-weight:bold;left:120.95px;transform-origin:50% 50%;transform:scaleX(0.974) rotate(0.03deg);">N° Interno</div><div class="a" style="left:168px;top:417.6px;width:1px;height:12.8px;background:#dfeaf5"></div><div class="a" style="left:167px;top:417.6px;width:1px;height:12.8px;background:#6c93b8"></div><div class="a" style="left:167px;top:430.4px;width:1px;height:42.6px;background:#e0e0e0"></div><div class="t" style="top:418px;font-size:9px;color:#e9f1f9;font-weight:bold;left:172.54px;transform-origin:50% 50%;transform:scaleX(0.914) rotate(0.03deg);">Job Number</div><div class="a" style="left:230px;top:417.6px;width:1px;height:12.8px;background:#dfeaf5"></div><div class="a" style="left:229px;top:417.6px;width:1px;height:12.8px;background:#6c93b8"></div><div class="a" style="left:229px;top:430.4px;width:1px;height:42.6px;background:#e0e0e0"></div><div class="t" style="top:418px;font-size:9px;color:#e9f1f9;font-weight:bold;left:242.65px;transform-origin:50% 50%;transform:scaleX(0.876) rotate(0.03deg);">N° OT</div><div class="a" style="left:282px;top:417.6px;width:1px;height:12.8px;background:#dfeaf5"></div><div class="a" style="left:281px;top:417.6px;width:1px;height:12.8px;background:#6c93b8"></div><div class="a" style="left:281px;top:430.4px;width:1px;height:42.6px;background:#e0e0e0"></div><div class="t" style="top:418px;font-size:9px;color:#e9f1f9;font-weight:bold;left:335.44px;transform-origin:50% 50%;transform:scaleX(0.932) rotate(0.03deg);">Detalle</div><div class="a" style="left:420px;top:417.6px;width:1px;height:12.8px;background:#dfeaf5"></div><div class="a" style="left:419px;top:417.6px;width:1px;height:12.8px;background:#6c93b8"></div><div class="a" style="left:419px;top:430.4px;width:1px;height:42.6px;background:#e0e0e0"></div><div class="t" style="top:418px;font-size:9px;color:#e9f1f9;font-weight:bold;left:425.45px;transform-origin:50% 50%;transform:scaleX(0.922) rotate(0.03deg);">N° Cta</div><div class="a" style="left:458px;top:417.6px;width:1px;height:12.8px;background:#dfeaf5"></div><div class="a" style="left:457px;top:417.6px;width:1px;height:12.8px;background:#6c93b8"></div><div class="a" style="left:457px;top:430.4px;width:1px;height:42.6px;background:#e0e0e0"></div><div class="t" style="top:418px;font-size:9px;color:#e9f1f9;font-weight:bold;left:487.84px;transform-origin:50% 50%;transform:scaleX(0.920) rotate(0.03deg);">Cuenta Contable</div><div class="a" style="left:590px;top:417.6px;width:1px;height:12.8px;background:#dfeaf5"></div><div class="a" style="left:589px;top:417.6px;width:1px;height:12.8px;background:#6c93b8"></div><div class="a" style="left:589px;top:430.4px;width:1px;height:42.6px;background:#e0e0e0"></div><div class="t" style="top:418px;font-size:9px;color:#e9f1f9;font-weight:bold;left:593.70px;transform-origin:50% 50%;transform:scaleX(0.769) rotate(0.03deg);">CC</div><div class="a" style="left:612px;top:417.6px;width:1px;height:12.8px;background:#dfeaf5"></div><div class="a" style="left:611px;top:417.6px;width:1px;height:12.8px;background:#6c93b8"></div><div class="a" style="left:611px;top:430.4px;width:1px;height:42.6px;background:#e0e0e0"></div><div class="t" style="top:418px;font-size:9px;color:#e9f1f9;font-weight:bold;left:636.39px;transform-origin:50% 50%;transform:scaleX(0.911) rotate(0.03deg);">Moneda</div><div class="a" style="left:697px;top:417.6px;width:1px;height:12.8px;background:#dfeaf5"></div><div class="a" style="left:696px;top:417.6px;width:1px;height:12.8px;background:#6c93b8"></div><div class="a" style="left:696px;top:430.4px;width:1px;height:42.6px;background:#e0e0e0"></div><div class="t" style="top:418px;font-size:9px;color:#e9f1f9;font-weight:bold;left:715.20px;transform-origin:50% 50%;transform:scaleX(0.900) rotate(0.03deg);">Neto</div><div class="a" style="left:756px;top:417.6px;width:1px;height:12.8px;background:#dfeaf5"></div><div class="a" style="left:755px;top:417.6px;width:1px;height:12.8px;background:#6c93b8"></div><div class="a" style="left:755px;top:430.4px;width:1px;height:42.6px;background:#e0e0e0"></div><div class="t" style="top:418px;font-size:9px;color:#e9f1f9;font-weight:bold;left:764.14px;transform-origin:50% 50%;transform:scaleX(0.936) rotate(0.03deg);">Cotización</div><div class="a" style="left:818px;top:417.6px;width:1px;height:12.8px;background:#dfeaf5"></div><div class="a" style="left:817px;top:417.6px;width:1px;height:12.8px;background:#6c93b8"></div><div class="a" style="left:817px;top:430.4px;width:1px;height:42.6px;background:#e0e0e0"></div><div class="t" style="top:418px;font-size:9px;color:#e9f1f9;font-weight:bold;left:823.29px;transform-origin:50% 50%;transform:scaleX(0.939) rotate(0.03deg);">Importe Rendición</div><div class="a" style="left:907px;top:417.6px;width:1px;height:12.8px;background:#dfeaf5"></div><div class="a" style="left:906px;top:417.6px;width:1px;height:12.8px;background:#6c93b8"></div><div class="a" style="left:906px;top:430.4px;width:1px;height:42.6px;background:#e0e0e0"></div><div class="t" style="top:418px;font-size:9px;color:#e9f1f9;font-weight:bold;left:910.89px;transform-origin:50% 50%;transform:scaleX(0.937) rotate(0.03deg);">Deducible</div><div class="a" style="left:958px;top:417.6px;width:1px;height:12.8px;background:#dfeaf5"></div><div class="a" style="left:957px;top:417.6px;width:1px;height:12.8px;background:#6c93b8"></div><div class="a" style="left:957px;top:430.4px;width:1px;height:42.6px;background:#e0e0e0"></div><div class="t" style="top:418px;font-size:9px;color:#e9f1f9;font-weight:bold;left:977.55px;transform-origin:50% 50%;transform:scaleX(0.933) rotate(0.03deg);">SubCuenta/Concepto</div><div class="a" style="left:1090px;top:417.6px;width:1px;height:12.8px;background:#dfeaf5"></div><div class="a" style="left:1089px;top:417.6px;width:1px;height:12.8px;background:#6c93b8"></div><div class="a" style="left:1089px;top:430.4px;width:1px;height:42.6px;background:#e0e0e0"></div><div class="a" style="left:31px;top:473px;width:1059px;height:1px;background:#a8a8a8"></div><div class="t" style="top:431px;font-size:8.6px;color:#2a2a2a;right:1075.2px;transform-origin:100% 50%;transform:scaleX(0.875) rotate(0.03deg);-webkit-text-stroke:0.05px #2a2a2a;">1</div><div class="t" style="top:431px;font-size:8.6px;color:#2a2a2a;left:140.8px;transform-origin:0 50%;transform:scaleX(0.875) rotate(0.03deg);-webkit-text-stroke:0.05px #2a2a2a;">1</div><div class="t" style="top:431px;font-size:8.5px;color:#2a2a2a;left:284.1px;transform-origin:0 50%;transform:scaleX(0.736) rotate(0.03deg);-webkit-text-stroke:0.05px #2a2a2a;">TEST</div><div class="t" style="top:431px;font-size:8.5px;color:#2a2a2a;left:460.4px;transform-origin:0 50%;transform:scaleX(0.857) rotate(0.03deg);-webkit-text-stroke:0.05px #2a2a2a;">TEST  IVA REDUCIDO</div><div class="t" style="top:431px;font-size:8.5px;color:#2a2a2a;left:596.4px;transform-origin:0 50%;transform:scaleX(0.824) rotate(0.03deg);-webkit-text-stroke:0.05px #2a2a2a;">01</div><div class="t" style="top:431px;font-size:8.6px;color:#2a2a2a;right:437.2px;transform-origin:100% 50%;transform:scaleX(0.958) rotate(0.03deg);-webkit-text-stroke:0.05px #2a2a2a;">100.000,00</div><div class="t" style="top:431px;font-size:8.6px;color:#2a2a2a;right:374.4px;transform-origin:100% 50%;transform:scaleX(0.935) rotate(0.03deg);-webkit-text-stroke:0.05px #2a2a2a;">1,0000</div><div class="t" style="top:431px;font-size:8.6px;color:#2a2a2a;right:285.4px;transform-origin:100% 50%;transform:scaleX(0.958) rotate(0.03deg);-webkit-text-stroke:0.05px #2a2a2a;">100.000,00</div><div class="t" style="top:431px;font-size:8.5px;color:#2a2a2a;left:960.4px;transform-origin:0 50%;transform:scaleX(0.852) rotate(0.03deg);-webkit-text-stroke:0.05px #2a2a2a;">TEST IVA REDUCIDO</div><div class="t" style="top:459px;font-size:8.5px;color:#303030;font-weight:bold;left:613.4px;transform-origin:0 50%;transform:scaleX(0.926) rotate(0.03deg);">TOTALES</div><div class="t" style="top:459px;font-size:8.6px;color:#303030;font-weight:bold;right:285.4px;transform-origin:100% 50%;transform:scaleX(0.958) rotate(0.03deg);">100.000,00</div><div class="a" style="left:45.2px;top:432.3px;width:10px;height:10px;background:linear-gradient(135deg,#e4e4e4,#fdfdfd 70%);border:1.2px solid #5f82aa;border-radius:1.5px"></div><svg class="a" style="left:927.9px;top:432.3px" width="10" height="10.2" viewBox="0 0 10 10.2"><rect x="0.6" y="0.6" width="8.8" height="9" rx="1.2" fill="#fff" stroke="#7d9abb" stroke-width="1.2"/><path d="M2.5 5 L3.9 6.9 L7.1 3.2" fill="none" stroke="#129a12" stroke-width="1.8" stroke-linecap="round" stroke-linejoin="round"/></svg><div class="a" style="left:171.2px;top:434px;width:9.8px;height:4.6px;background:#c3c3c3"></div><div class="a" style="left:181.0px;top:434px;width:4.9px;height:4.6px;background:#d7d7d7"></div><div class="a" style="left:171.2px;top:438.6px;width:9.8px;height:3.4px;background:#d4d4d4"></div><div class="a" style="left:181.0px;top:438.6px;width:4.9px;height:3.4px;background:#dcdcdc"></div><div class="a" style="left:231.5px;top:434px;width:4.8px;height:4.6px;background:#dddbd9"></div><div class="a" style="left:236.3px;top:434px;width:4.9px;height:4.6px;background:#c4c2c0"></div><div class="a" style="left:241.2px;top:434px;width:4.9px;height:4.6px;background:#ccd1d7"></div><div class="a" style="left:246.1px;top:434px;width:4.9px;height:4.6px;background:#c2c2c4"></div><div class="a" style="left:251.0px;top:434px;width:4.9px;height:4.6px;background:#d9d7d3"></div><div class="a" style="left:255.9px;top:434px;width:4.9px;height:4.6px;background:#aeb0b0"></div><div class="a" style="left:260.8px;top:434px;width:4.9px;height:4.6px;background:#cbc9c7"></div><div class="a" style="left:265.7px;top:434px;width:4.9px;height:4.6px;background:#bfbfc5"></div><div class="a" style="left:270.6px;top:434px;width:4.9px;height:4.6px;background:#c9c5c3"></div><div class="a" style="left:275.5px;top:434px;width:4.5px;height:4.6px;background:#d3d7db"></div><div class="a" style="left:231.5px;top:438.6px;width:4.8px;height:3.4px;background:#e0dedc"></div><div class="a" style="left:236.3px;top:438.6px;width:4.9px;height:3.4px;background:#d0cecc"></div><div class="a" style="left:241.2px;top:438.6px;width:4.9px;height:3.4px;background:#dde1e6"></div><div class="a" style="left:246.1px;top:438.6px;width:4.9px;height:3.4px;background:#cfcfd1"></div><div class="a" style="left:251.0px;top:438.6px;width:4.9px;height:3.4px;background:#e4e2de"></div><div class="a" style="left:255.9px;top:438.6px;width:4.9px;height:3.4px;background:#d4d4d4"></div><div class="a" style="left:260.8px;top:438.6px;width:4.9px;height:3.4px;background:#dad8d6"></div><div class="a" style="left:265.7px;top:438.6px;width:4.9px;height:3.4px;background:#cdcdd2"></div><div class="a" style="left:270.6px;top:438.6px;width:4.9px;height:3.4px;background:#d9d6d4"></div><div class="a" style="left:275.5px;top:438.6px;width:4.5px;height:3.4px;background:#dde0e3"></div><div class="a" style="left:428.1px;top:434.2px;width:4.9px;height:2.8px;background:#dcdcdc"></div><div class="a" style="left:433.0px;top:434.2px;width:4.9px;height:2.8px;background:#d2d0ce"></div><div class="a" style="left:437.9px;top:434.2px;width:5px;height:2.8px;background:#cdd0d2"></div><div class="a" style="left:442.9px;top:434.2px;width:5px;height:2.8px;background:#d9d9d9"></div><div class="a" style="left:428.1px;top:437px;width:4.9px;height:4.9px;background:#d0ccc8"></div><div class="a" style="left:433.0px;top:437px;width:4.9px;height:4.9px;background:#c6c6c6"></div><div class="a" style="left:437.9px;top:437px;width:5px;height:4.9px;background:#cacdd0"></div><div class="a" style="left:442.9px;top:437px;width:5px;height:4.9px;background:#bdbdbf"></div><div class="a" style="left:1160px;top:417px;width:11.3px;height:142.5px;background:#f0f0f0;box-shadow:inset 1px 0 0 #fbfbfb"></div><div class="a" style="left:1160px;top:427.4px;width:11.3px;height:1px;background:#bdbdbd"></div><div class="a" style="left:1160px;top:428.4px;width:11.3px;height:1px;background:#fcfcfc"></div><div class="a" style="left:1160px;top:417px;width:11.3px;height:10.4px;background:#f3f3f3"></div><div class="a" style="left:1162.9px;top:420.5px;width:0;height:0;border-left:2.8px solid transparent;border-right:2.8px solid transparent;border-bottom:3.4px solid #000"></div><div class="a" style="left:1160px;top:545.6px;width:11.3px;height:1px;background:#8c8c8c"></div><div class="a" style="left:1160px;top:546.6px;width:11.3px;height:12.6px;background:#f3f3f3;box-shadow:inset 1px 1px 0 #fcfcfc"></div><div class="a" style="left:1162.8px;top:552.3px;width:0;height:0;border-left:2.8px solid transparent;border-right:2.8px solid transparent;border-top:3.4px solid #000"></div><div class="a" style="left:31.2px;top:559.5px;width:1128.6px;height:11px;background:#f0f0f0;box-shadow:inset 0 1px 0 #fcfcfc"></div><div class="a" style="left:31.2px;top:559.5px;width:10px;height:11px;background:#f3f3f3"></div><div class="a" style="left:41.2px;top:559.5px;width:1.1px;height:11px;background:#c2c2c2"></div><div class="a" style="left:42.3px;top:559.5px;width:1px;height:11px;background:#fcfcfc"></div><div class="a" style="left:33.8px;top:562.7px;width:0;height:0;border-top:2.8px solid transparent;border-bottom:2.8px solid transparent;border-right:3.4px solid #000"></div><div class="a" style="left:1146px;top:559.5px;width:1px;height:11px;background:#9c9c9c"></div><div class="a" style="left:1147px;top:559.5px;width:12.6px;height:11px;background:#f3f3f3;box-shadow:inset 1px 1px 0 #fcfcfc"></div><div class="a" style="left:1152.7px;top:562.6px;width:0;height:0;border-top:2.8px solid transparent;border-bottom:2.8px solid transparent;border-left:3.4px solid #000"></div><div class="a" style="left:1159.6px;top:559.5px;width:11.7px;height:11.5px;background:#c9c9c9"></div><div class="t" style="top:527px;font-size:16.5px;color:#bcbcbc;left:936.3px;transform-origin:0 50%;transform:scaleX(0.891) rotate(0.03deg);line-height:20px;height:20px;top:523.5px;-webkit-text-stroke:0;">Activar Windows</div><div class="t" style="top:544px;font-size:11.5px;color:#c0c0c0;left:936.3px;transform-origin:0 50%;transform:scaleX(0.958) rotate(0.03deg);-webkit-text-stroke:0;">Ve a Configuración para activar Windows.</div></body></html>
